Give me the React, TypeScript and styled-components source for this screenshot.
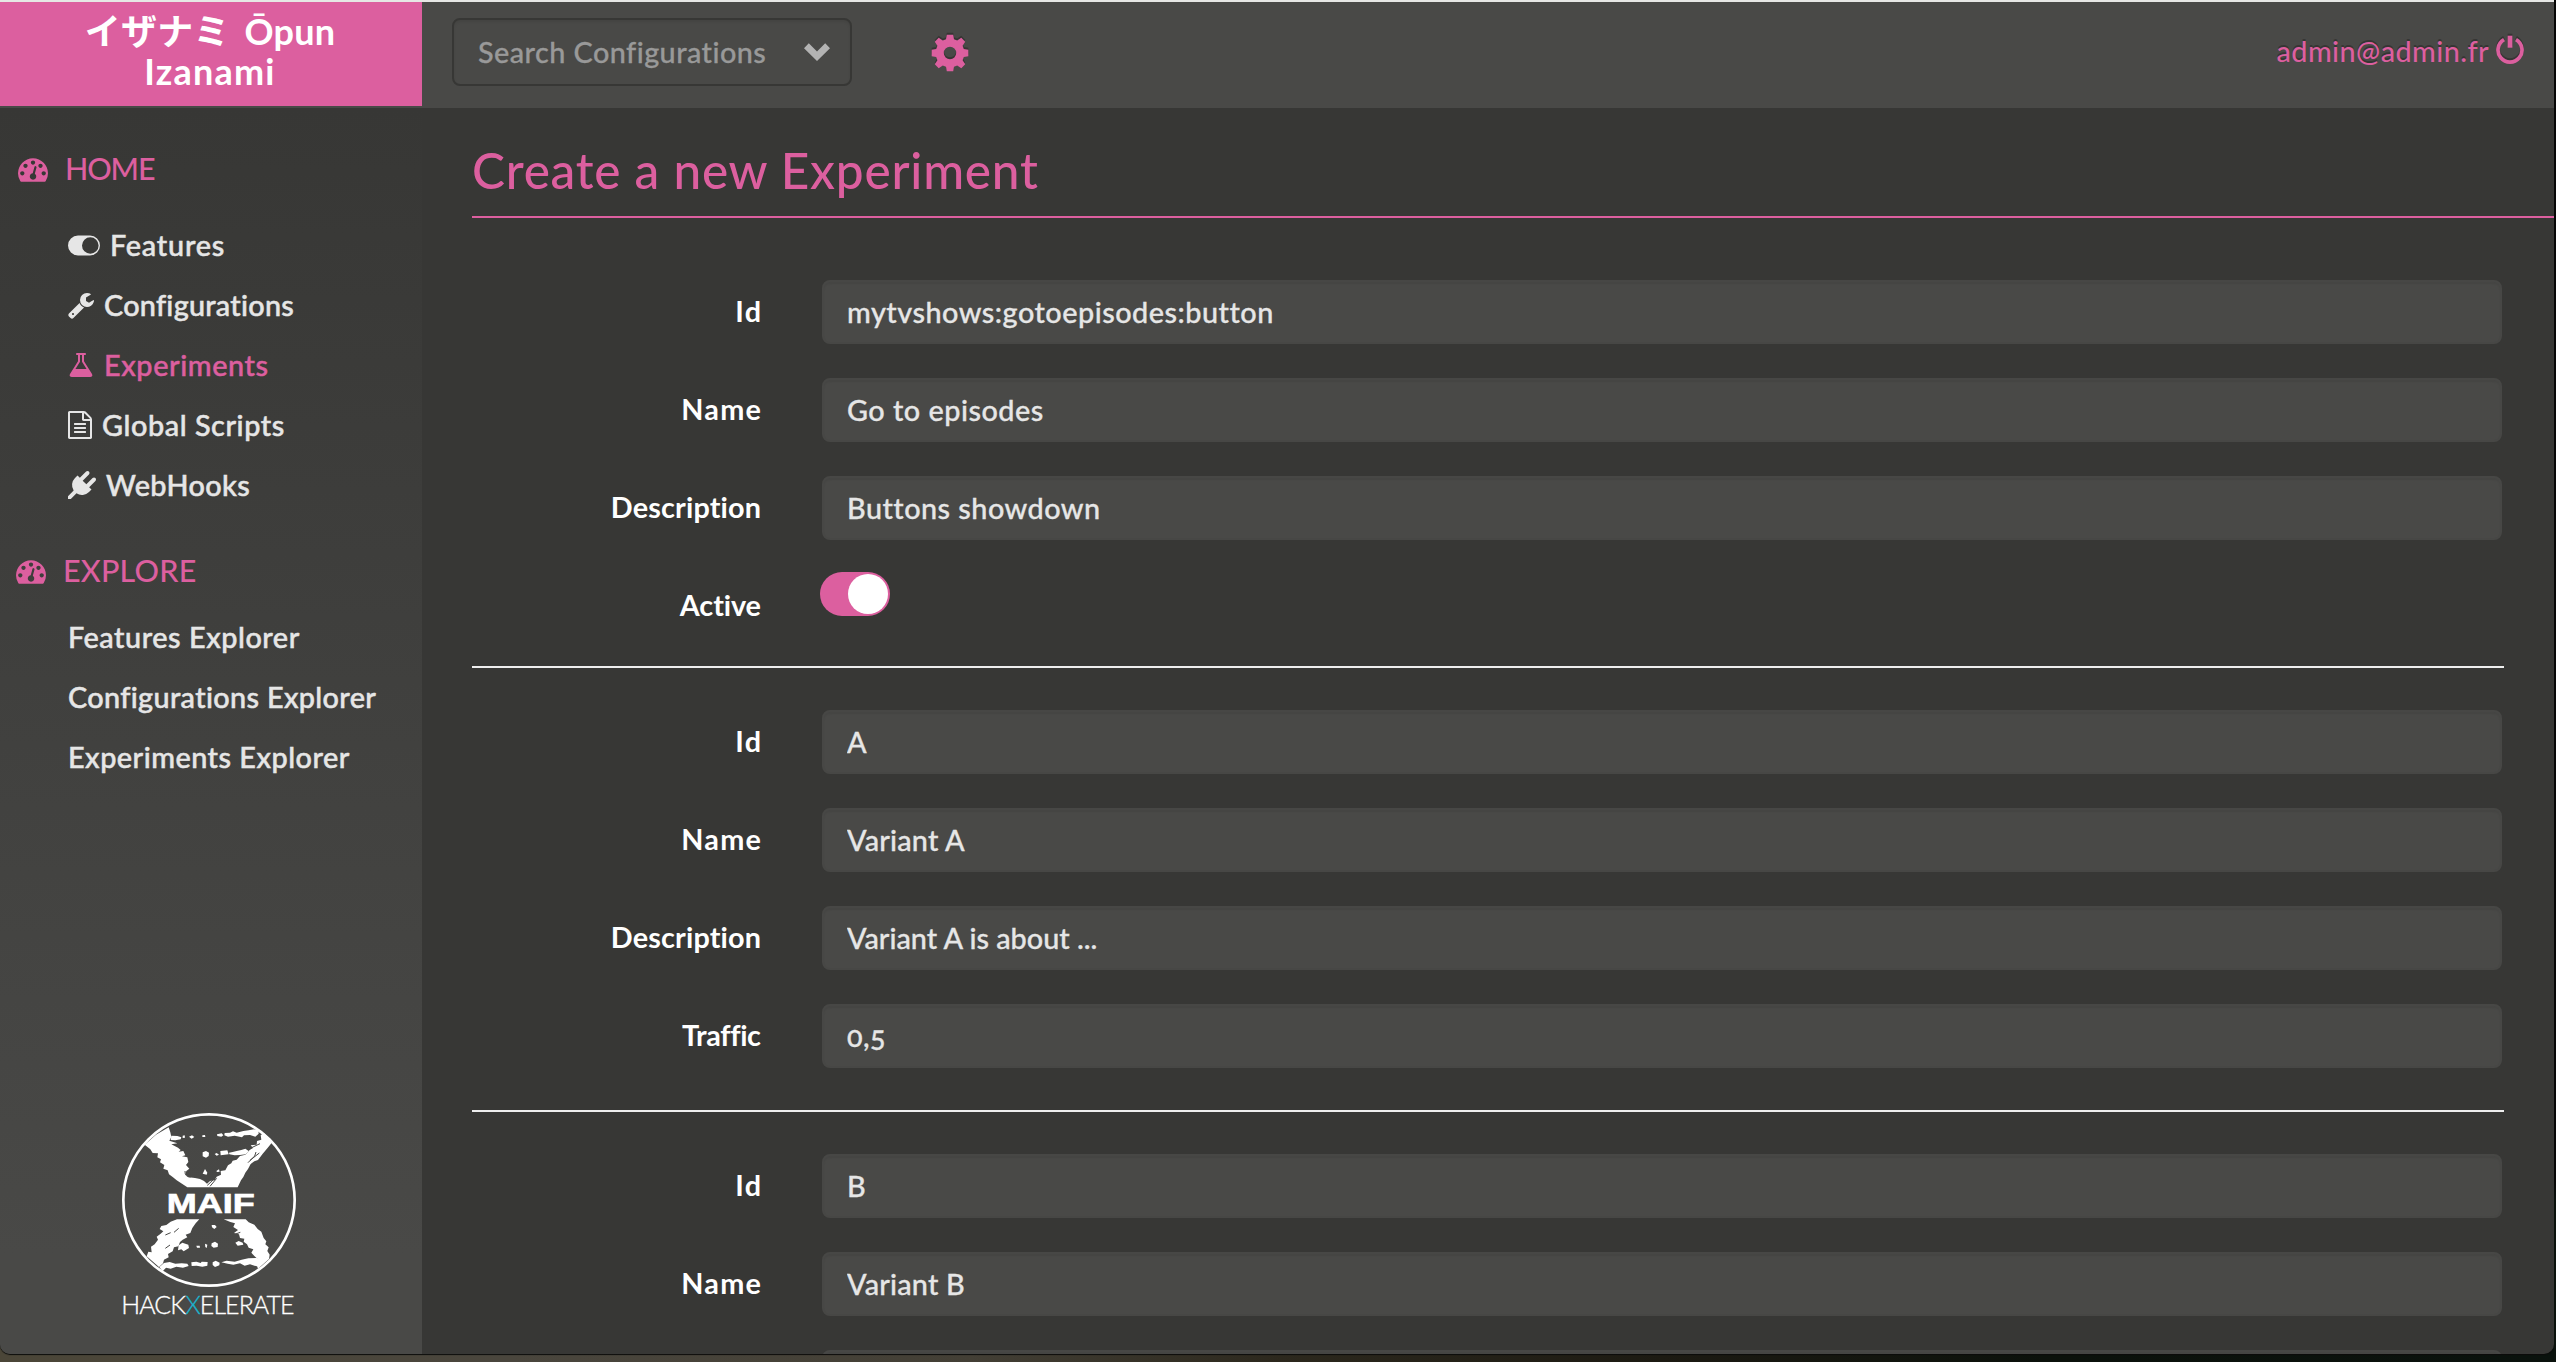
import React from "react";
import styled, { createGlobalStyle } from "styled-components";

const pink = "#dc5f9f";
const dark = "#373735";
const panel = "#494947";

const GlobalStyle = createGlobalStyle`
  *, *::before, *::after { box-sizing: border-box; }
  body {
    margin: 0;
    background: linear-gradient(90deg, #4b4638 0%, #4a463d 20%, #433f35 38%, #2c281d 50%, #1c1a12 65%, #0b110b 80%, #0a120d 100%);
    font-family: Lato, "Noto Sans CJK JP", sans-serif;
    overflow: hidden;
  }
`;

const Desktop = styled.div`
  width: 2556px;
  height: 1362px;
  padding-right: 2px;
  background: linear-gradient(180deg, #060606 0, #060606 1180px, transparent 1200px);
  background-size: 2px 1350px;
  background-repeat: no-repeat;
  background-position: right top;
`;

const Window = styled.div`
  height: 1354px;
  display: grid;
  grid-template-rows: 106px 1fr;
  border-top: 2px solid #e6e7e5;
  border-radius: 0 0 10px 10px;
  overflow: hidden;
  background: ${dark};
  box-shadow: 0 1px 1px #0c0c0a;
`;

const TopBar = styled.header`
  display: flex;
  align-items: flex-start;
  background: ${panel};
`;

const Brand = styled.div`
  width: 422px;
  height: 104px;
  padding: 9px 2px 0 0;
  background: ${pink};
  color: #fff;
  text-align: center;
  font-size: 36px;
  font-weight: 700;
  line-height: 40px;
`;

const BrandLine = styled.div<{ $track: number; $words?: number }>`
  letter-spacing: ${(p) => p.$track}px;
  word-spacing: ${(p) => p.$words ?? 0}px;
  white-space: pre;
`;

const Select = styled.div`
  display: flex;
  align-items: center;
  justify-content: space-between;
  width: 400px;
  height: 68px;
  margin: 16px 0 0 30px;
  padding: 0 20px 0 24px;
  border: 2px solid ${dark};
  border-radius: 8px;
  color: #999;
  font-size: 28.8px;
  font-weight: 500;
  letter-spacing: 0.45px;
  -webkit-text-stroke: 0.3px currentColor;
  box-shadow: inset 0 2px 3px rgba(0, 0, 0, 0.08);
`;

const Settings = styled.div`
  display: flex;
  margin: 31px 0 0 79px;
`;

const User = styled.div`
  display: flex;
  align-items: flex-start;
  gap: 7px;
  margin: 32px 30px 0 auto;
  color: ${pink};
  font-size: 28.8px;
  font-weight: 500;
  line-height: 34px;
  letter-spacing: 0.42px;
  text-shadow: 0 -2px 0 #363634;
`;

const shadowed = `filter: drop-shadow(0 -2px 0 #363634);`;
const PowerSvg = styled.svg`
  ${shadowed}
  display: block;
  margin-top: 1px;
`;
const GearSvg = styled.svg`
  ${shadowed}
  display: block;
`;

const Body = styled.div`
  display: grid;
  grid-template-columns: 422px 1fr;
  min-height: 0;
`;

const Sidebar = styled.nav`
  display: flex;
  flex-direction: column;
  padding: 40px 0 35px;
  background: linear-gradient(180deg, ${dark} 0%, ${panel} 92%);
`;

const Heading = styled.div<{ $left: number; $track: number }>`
  display: flex;
  align-items: center;
  gap: 17px;
  height: 40px;
  padding-left: ${(p) => p.$left}px;
  color: ${pink};
  font-size: 30.5px;
  font-weight: 500;
  letter-spacing: ${(p) => p.$track}px;
  & > svg { position: relative; top: 1px; }
`;

const NavList = styled.div<{ $top: number; $bottom?: number }>`
  display: flex;
  flex-direction: column;
  margin: ${(p) => p.$top}px 0 ${(p) => p.$bottom ?? 0}px;
  padding-left: 68px;
`;

const NavItem = styled.a<{ $active?: boolean; $track: number }>`
  display: flex;
  align-items: center;
  gap: 10px;
  height: 60px;
  color: ${(p) => (p.$active ? pink : "#e6e6e6")};
  font-size: 28.8px;
  font-weight: 500;
  letter-spacing: ${(p) => p.$track}px;
  -webkit-text-stroke: 0.5px currentColor;
  white-space: nowrap;
`;

const Logo = styled.div`
  display: flex;
  flex-direction: column;
  align-items: center;
  width: 180px;
  margin: auto 0 0 119px;
`;

const LogoName = styled.div`
  height: 30px;
  margin: -1px 3px 0 0;
  color: #fff;
  font-size: 25px;
  font-weight: 300;
  line-height: 30px;
  letter-spacing: -0.95px;
  -webkit-text-stroke: 0.3px currentColor;
  white-space: nowrap;
  & > span { color: #1cb3cc; }
`;

const Main = styled.main`
  min-width: 0;
  min-height: 0;
  overflow: hidden;
  padding: 34px 0 0 50px;
`;

const Title = styled.h1`
  margin: 0 0 62px;
  padding-bottom: 18px;
  border-bottom: 2px solid ${pink};
  color: ${pink};
  font-size: 49.5px;
  font-weight: 500;
  line-height: 56px;
  letter-spacing: 0.78px;
`;

const Form = styled.form`
  display: flex;
  flex-direction: column;
  width: 2032px;
`;

const Fieldset = styled.div`
  display: flex;
  flex-direction: column;
  gap: 34px;
  padding-right: 2px;
`;

const Field = styled.div<{ $height?: number }>`
  display: grid;
  grid-template-columns: 289px 1fr;
  column-gap: 61px;
  align-items: start;
  height: ${(p) => p.$height ?? 64}px;
`;

const Label = styled.label<{ $track: number }>`
  margin-right: ${(p) => -p.$track}px;
  color: #fff;
  font-size: 28.8px;
  font-weight: 700;
  line-height: 63px;
  letter-spacing: ${(p) => p.$track}px;
  text-align: right;
`;

const Input = styled.input<{ $track: number }>`
  width: 100%;
  height: 64px;
  padding: 0 22px 1px 23px;
  border: 2px solid #474745;
  border-radius: 8px;
  outline: none;
  background: ${panel};
  box-shadow: inset 0 2px 2px rgba(0, 0, 0, 0.06);
  color: #e6e6e6;
  font-family: inherit;
  font-size: 28.8px;
  font-weight: 500;
  font-variant-numeric: oldstyle-nums;
  letter-spacing: ${(p) => p.$track}px;
  -webkit-text-stroke: 0.3px currentColor;
`;

const Switch = styled.div`
  display: flex;
  justify-content: flex-end;
  align-items: center;
  width: 70px;
  height: 44px;
  margin: -2px 0 0 -2px;
  padding: 2px;
  border-radius: 22px;
  background: ${pink};
`;

const Thumb = styled.div`
  width: 40px;
  height: 40px;
  border-radius: 50%;
  background: #fff;
`;

const Divider = styled.div`
  height: 2px;
  margin: 42px 0;
  background: #eeeeee;
`;

const Gauge = () => (
  <svg width="30" height="30" viewBox="0 0 1792 1792" fill="currentColor">
    <path d="M384 1152q0-53-37.5-90.5t-90.5-37.5-90.5 37.5-37.5 90.5 37.5 90.5 90.5 37.5 90.5-37.5 37.5-90.5zm192-448q0-53-37.5-90.5t-90.5-37.5-90.5 37.5-37.5 90.5 37.5 90.5 90.5 37.5 90.5-37.5 37.5-90.5zm428 481l101-382q6-26-7.5-48.5t-38.5-29.5-48 6.5-30 39.5l-101 382q-60 5-107 43.5t-63 98.5q-20 77 20 146t117 89 146-20 89-117q16-60-6-117t-72-91zm660-33q0-53-37.5-90.5t-90.5-37.5-90.5 37.5-37.5 90.5 37.5 90.5 90.5 37.5 90.5-37.5 37.5-90.5zm-640-640q0-53-37.5-90.5t-90.5-37.5-90.5 37.5-37.5 90.5 37.5 90.5 90.5 37.5 90.5-37.5 37.5-90.5zm448 192q0-53-37.5-90.5t-90.5-37.5-90.5 37.5-37.5 90.5 37.5 90.5 90.5 37.5 90.5-37.5 37.5-90.5zm320 448q0 261-141 483-19 29-54 29h-1402q-35 0-54-29-141-221-141-483 0-182 71-348t191-286 286-191 348-71 348 71 286 191 191 286 71 348z" />
  </svg>
);

const ToggleIcon = () => (
  <svg width="32" height="22" viewBox="0 0 32 22">
    <path
      fill="currentColor"
      fillRule="evenodd"
      d="M10 1.5h12a10 10 0 0 1 0 20H10a10 10 0 0 1 0-20zM22.3 3.2a8.3 8.3 0 1 0 0 16.6 8.3 8.3 0 0 0 0-16.6z"
    />
  </svg>
);

const WrenchIcon = () => (
  <svg width="26" height="28" viewBox="64 0 1664 1792" fill="currentColor">
    <path d="M448 1472q0-26-19-45t-45-19-45 19-19 45 19 45 45 19 45-19 19-45zm644-420l-682 682q-37 37-90 37-52 0-91-37l-106-108q-38-36-38-90 0-53 38-91l681-681q39 98 114.500 173.500t173.500 114.500zm634-435q0 39-23 106-47 134-164.500 217.500t-258.500 83.500q-185 0-316.500-131.500t-131.500-316.500 131.500-316.500 316.500-131.500q58 0 121.500 16.500t107.500 46.500q16 11 16 28t-16 28l-293 169v224l193 107q5-3 79-48.500t135.500-81 70.500-35.500q15 0 23.500 10t8.500 25z" />
  </svg>
);

const FlaskIcon = () => (
  <svg width="26" height="28" viewBox="64 0 1664 1792" fill="currentColor">
    <path d="M1591 1448q56 89 21.500 152.500t-140.500 63.500h-1152q-106 0-140.500-63.500t21.500-152.500l503-793v-399h-64q-26 0-45-19t-19-45 19-45 45-19h512q26 0 45 19t19 45-19 45-45 19h-64v399zm-779-725l-272 429h712l-272-429-20-31v-436h-128v436z" />
  </svg>
);

const FileIcon = () => (
  <svg width="24" height="28" viewBox="128 0 1536 1792" fill="currentColor">
    <path d="M1596 380q28 28 48 76t20 88v1152q0 40-28 68t-68 28h-1344q-40 0-68-28t-28-68v-1600q0-40 28-68t68-28h896q40 0 88 20t76 48zm-444-244v376h376q-10-29-22-41l-313-313q-12-12-41-22zm384 1528v-1024h-416q-40 0-68-28t-28-68v-416h-768v1536h1280zm-1024-864q0-14 9-23t23-9h704q14 0 23 9t9 23v64q0 14-9 23t-23 9h-704q-14 0-23-9t-9-23v-64zm736 224q14 0 23 9t9 23v64q0 14-9 23t-23 9h-704q-14 0-23-9t-9-23v-64q0-14 9-23t23-9h704zm0 256q14 0 23 9t9 23v64q0 14-9 23t-23 9h-704q-14 0-23-9t-9-23v-64q0-14 9-23t23-9h704z" />
  </svg>
);

const PlugIcon = () => (
  <svg width="28" height="28" viewBox="0 0 1792 1792" fill="currentColor">
    <path d="M1755 453q37 38 37 90.500t-37 90.500l-401 400 150 150-160 160q-163 163-389.500 186.500t-411.500-100.500l-362 362h-181v-181l362-362q-124-185-100.500-411.500t186.500-389.500l160-160 150 150 400-401q38-37 91-37t90 37 37 90.500-37 90.500l-400 401 234 234 401-400q38-37 91-37t90 37z" />
  </svg>
);

const GearIcon = () => (
  <GearSvg width="38" height="40" viewBox="-19 -20 38 40">
    <path
      fill={pink}
      fillRule="evenodd"
      d="M-3.200-18.300H3.200L4-13.800 7.200-12.600 11.300-15.200 15.200-11.300 12.600-7.200 13.800-4 18.300-3.200V3.200L13.800 4 12.600 7.200 15.200 11.300 11.300 15.200 7.200 12.600 4 13.800 3.200 18.300H-3.200L-4 13.800-7.200 12.600-11.300 15.200-15.200 11.300-12.600 7.200-13.800 4-18.300 3.200V-3.200L-13.800-4-12.600-7.200-15.200-11.300-11.300-15.200-7.200-12.600-4-13.800zM0-6.200A6.200 6.200 0 1 0 0 6.200 6.200 6.200 0 0 0 0-6.200z"
    />
  </GearSvg>
);

const PowerIcon = () => (
  <PowerSvg width="28" height="30" viewBox="-14 -15 28 30">
    <path d="M-6-10.300A12 12 0 1 0 6-10.300" fill="none" stroke={pink} strokeWidth="3.700" />
    <rect x="-2.350" y="-14.300" width="4.700" height="12" fill={pink} />
  </PowerSvg>
);

const ChevronIcon = () => (
  <svg width="26" height="18" viewBox="0 0 26 18">
    <path d="M0 5.200 4.800.3 13 8.500 21.200.3 26 5.200 13 18z" fill="#b3b3b3" />
  </svg>
);

const Emblem = () => (
  <svg width="180" height="180" viewBox="57 57 540 540" fill="#fff">
    <circle cx="327" cy="327" r="257" fill="none" stroke="#fff" strokeWidth="8" />
    <path d="M206 109 211 124 214 138 208 149 232 157 214 160 234 170 242 177 236 182 250 180 256 193 246 196 262 199 265 213 258 222 268 233 259 240 256 250 266 259 285 261 300 264 312 270 321 278 330 270 344 268 350 257 363 251 362 240 376 238 384 223 394 217 398 209 410 206 420 195 436 191 449 177 459 171 452 163 470 161 471 150 484 146 482 132 493 127 517 153 507 166 497 178 487 190 474 207 463 211 452 219 444 234 436 245 430 258 423 268 413 289H262L246 278 230 268 219 259 207 250 203 238 190 233 193 222 180 214 183 205 172 199 174 187 158 186 151 175 134 161 168 131z" />
    <path d="M214 134 232 135 244 139 242 145 226 148 212 147zM248 134 254 133 255 140 248 141zM267 137 276 133 283 138 275 143zM307 133 315 132 316 138 307 138zM351 130 365 127 370 133 364 137 352 135zM374 126 390 125 399 121 410 125 430 120 446 118 462 115 475 118 476 128 466 137 450 132 432 133 426 139 404 134 384 137 373 133zM308 184 318 180 327 185 326 195 318 200 308 196zM344 189 350 186 357 191 350 194zM361 180 382 178 386 190 362 193zM387 185 398 183 410 180 424 177 436 173 446 180 437 190 420 192 404 193 388 190zM308 248 315 234 322 245 320 251zM349 240 357 235 359 242 351 243z" />
    <path d="M231 385H298L287 397 277 411 271 426 257 431 262 439 248 446 240 453 235 466 222 469 218 481 204 489 206 499 192 506 189 517 177 528 140 496 145 482 155 484 153 467 164 460 174 446 170 437 181 429 190 421 179 414 184 405 199 402 212 392z" />
    <path d="M371 385H437L446 394 463 401 473 414 484 422 491 441 499 451 496 460 506 469 502 480 509 491 507 504 474 533 469 520 477 508 463 495 454 485 460 475 446 470 441 460 431 452 433 443 420 441 417 430 402 426 414 417 400 408 405 397 391 393z" />
    <path d="M335 402 345 402 350 408 343 414 336 409zM236 463 247 455 265 461 267 471 251 481 244 475 234 478zM289 464 299 464 300 470 291 470zM315 458 322 461 320 471 316 468zM335 457 345 452 354 458 353 468 341 470 334 465zM406 455 416 450 428 455 430 461 413 464zM178 528 192 516 209 513 226 518 245 517 262 518 266 525 249 530 229 527 212 533 198 530 188 541zM274 514 289 512 302 516 305 512 323 513 322 524 307 527 290 524 275 525zM338 514 347 509 359 515 358 523 345 528 338 522zM364 514 380 509 404 512 425 506 445 502 470 501 491 512 470 526 450 520 434 524 420 517 400 521 383 518z" />
    <path d="M255 240Q254 258 272 258M322 283 340 266M330 286 350 262M444 215 464 195 468 183M196 432 212 425M450 208 478 186M455 170 480 158M404 430 421 424M196 472 210 462M222 424 236 412" fill="none" stroke={panel} strokeWidth="3" />
    <text x="200" y="366" fontFamily="'Liberation Sans', Arial, sans-serif" fontWeight="700" fontSize="84" textLength="264" lengthAdjust="spacingAndGlyphs" stroke="#fff" strokeWidth="2">
      MAIF
    </text>
  </svg>
);

type FieldSpec = { label: string; track: number; value?: string; valueTrack?: number };

const sections: FieldSpec[][] = [
  [
    { label: "Id", track: 1.2, value: "mytvshows:gotoepisodes:button", valueTrack: 0.5 },
    { label: "Name", track: 1.3, value: "Go to episodes", valueTrack: 0.5 },
    { label: "Description", track: 0.15, value: "Buttons showdown", valueTrack: 0.47 },
    { label: "Active", track: -0.1 },
  ],
  [
    { label: "Id", track: 1.2, value: "A", valueTrack: 0 },
    { label: "Name", track: 1.3, value: "Variant A", valueTrack: 0.2 },
    { label: "Description", track: 0.15, value: "Variant A is about ...", valueTrack: 0 },
    { label: "Traffic", track: -0.35, value: "0,5", valueTrack: 0.4 },
  ],
  [
    { label: "Id", track: 1.2, value: "B", valueTrack: 0 },
    { label: "Name", track: 1.3, value: "Variant B", valueTrack: 0.2 },
    { label: "", track: 0, value: "", valueTrack: 0 },
  ],
];

const homeLinks = [
  { label: "Features", Icon: ToggleIcon, track: 0.8 },
  { label: "Configurations", Icon: WrenchIcon, track: 0.26 },
  { label: "Experiments", Icon: FlaskIcon, track: 0.6, active: true },
  { label: "Global Scripts", Icon: FileIcon, track: 0.58 },
  { label: "WebHooks", Icon: PlugIcon, track: 0.4 },
];

const exploreLinks = [
  { label: "Features Explorer", track: 0.55 },
  { label: "Configurations Explorer", track: 0.35 },
  { label: "Experiments Explorer", track: 0.5 },
];

export default function App() {
  return (
    <>
      <GlobalStyle />
      <Desktop>
        <Window>
          <TopBar>
            <Brand>
              <BrandLine $track={0.2} $words={-1.5}>{"イザナミ\u00a0 Ōpun"}</BrandLine>
              <BrandLine $track={1.2}>Izanami</BrandLine>
            </Brand>
            <Select>
              Search Configurations
              <ChevronIcon />
            </Select>
            <Settings>
              <GearIcon />
            </Settings>
            <User>
              admin@admin.fr
              <PowerIcon />
            </User>
          </TopBar>
          <Body>
            <Sidebar>
              <Heading $left={18} $track={-1.1}>
                <Gauge />
                HOME
              </Heading>
              <NavList $top={27} $bottom={35}>
                {homeLinks.map(({ label, Icon, track, active }) => (
                  <NavItem key={label} $track={track} $active={active}>
                    <Icon />
                    {label}
                  </NavItem>
                ))}
              </NavList>
              <Heading $left={16} $track={0.2}>
                <Gauge />
                EXPLORE
              </Heading>
              <NavList $top={17}>
                {exploreLinks.map(({ label, track }) => (
                  <NavItem key={label} $track={track}>
                    {label}
                  </NavItem>
                ))}
              </NavList>
              <Logo>
                <Emblem />
                <LogoName>
                  HACK<span>X</span>ELERATE
                </LogoName>
              </Logo>
            </Sidebar>
            <Main>
              <Title>Create a new Experiment</Title>
              <Form>
                {sections.map((fields, i) => (
                  <React.Fragment key={i}>
                    {i > 0 && <Divider />}
                    <Fieldset>
                      {fields.map((f) => (
                        <Field key={f.label} $height={f.value === undefined ? 50 : 64}>
                          <Label $track={f.track}>{f.label}</Label>
                          {f.value === undefined ? (
                            <Switch>
                              <Thumb />
                            </Switch>
                          ) : (
                            <Input $track={f.valueTrack ?? 0} defaultValue={f.value} />
                          )}
                        </Field>
                      ))}
                    </Fieldset>
                  </React.Fragment>
                ))}
              </Form>
            </Main>
          </Body>
        </Window>
      </Desktop>
    </>
  );
}
